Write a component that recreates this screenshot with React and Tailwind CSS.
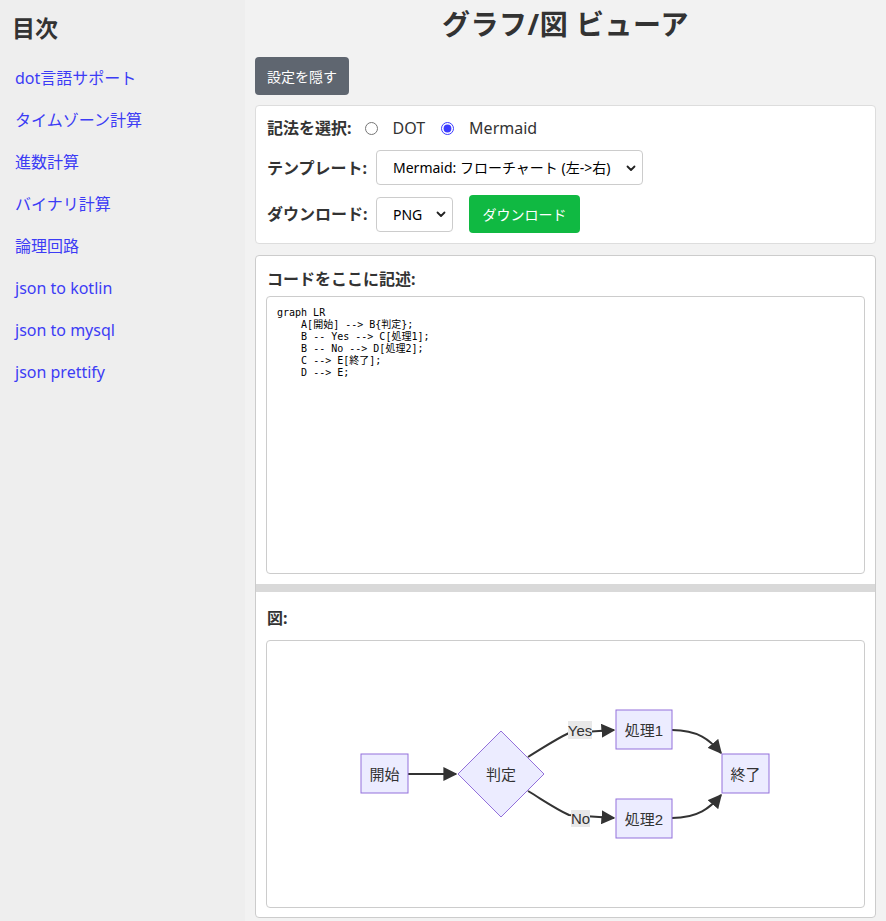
import { useState } from "react";

const links = [
  "dot言語サポート",
  "タイムゾーン計算",
  "進数計算",
  "バイナリ計算",
  "論理回路",
  "json to kotlin",
  "json to mysql",
  "json prettify",
];

const code = `graph LR
    A[開始] --> B{判定};
    B -- Yes --> C[処理1];
    B -- No --> D[処理2];
    C --> E[終了];
    D --> E;`;

const sans = "font-['Noto_Sans','Noto_Sans_CJK_JP',sans-serif]";

function Chevron() {
  return (
    <svg width="10" height="10" viewBox="0 0 10 10" className="pointer-events-none absolute right-[7px] top-1/2 -translate-y-1/2">
      <path d="M1.5 3.5 L5 7 L8.5 3.5" fill="none" stroke="#222" strokeWidth="1.8" strokeLinecap="round" strokeLinejoin="round" />
    </svg>
  );
}

function Diagram() {
  const node = "fill-[#ececff] stroke-[#9370db]";
  return (
    <svg viewBox="267 641 597 266" className="w-full h-full block">
      <defs>
        <marker id="arr" viewBox="0 0 10 10" refX="9" refY="5" markerWidth="7" markerHeight="7" orient="auto">
          <path d="M0 0 L10 5 L0 10 z" fill="#333" />
        </marker>
      </defs>
      <g fill="none" stroke="#333" strokeWidth="2">
        <path d="M408 774 L456 774" markerEnd="url(#arr)" />
        <path d="M528 757 C546 746 556 739 569 733 L614 730" markerEnd="url(#arr)" />
        <path d="M528 791 C546 802 556 809 569 815 L614 818" markerEnd="url(#arr)" />
        <path d="M672 730 C698 730 710 740 721 753" markerEnd="url(#arr)" />
        <path d="M672 818 C698 818 710 808 721 795" markerEnd="url(#arr)" />
      </g>
      <rect x="568" y="721" width="24" height="18" fill="#e8e8e8" />
      <rect x="571" y="810" width="19" height="17" fill="#e8e8e8" />
      <g className={node} strokeWidth="1">
        <rect x="361" y="754" width="47" height="39" />
        <path d="M501 731 L544 774 L501 817 L458 774 Z" />
        <rect x="616" y="710" width="56" height="39" />
        <rect x="616" y="799" width="56" height="39" />
        <rect x="722" y="754" width="47" height="39" />
      </g>
      <g fill="#333" fontSize="15" textAnchor="middle" dominantBaseline="central" fontFamily="'Liberation Sans','Noto Sans CJK JP',sans-serif">
        <text x="384.5" y="774">開始</text>
        <text x="501" y="774">判定</text>
        <text x="644" y="730">処理1</text>
        <text x="644" y="819">処理2</text>
        <text x="745.5" y="774">終了</text>
        <text x="580" y="730">Yes</text>
        <text x="580.5" y="818.5">No</text>
      </g>
    </svg>
  );
}

export default function App() {
  const [mode, setMode] = useState("mermaid");
  const [showSettings, setShowSettings] = useState(true);

  return (
    <div className={`flex min-h-screen bg-[#f2f2f2] text-[#333] ${sans}`}>
      {/* Sidebar */}
      <aside className="w-[245px] shrink-0 bg-[#eeeeee] pl-[12px] pt-[11px]">
        <h2 className="text-[23px] font-bold leading-[34px] mb-[22px]">目次</h2>
        <ul className="flex flex-col">
          {links.map((l) => (
            <li key={l} className="h-[42px] flex items-start">
              <a href="#" className="text-[16px] leading-[22px] text-[#3c3cf5] pl-[3px]">{l}</a>
            </li>
          ))}
        </ul>
      </aside>

      {/* Main */}
      <main className="flex-1 px-[10px] pb-[3px]">
        <h1 className="text-center text-[28px] font-bold leading-[40px] pt-[4px] mb-[13px] tracking-[0.5px]">グラフ/図 ビューア</h1>

        <button
          onClick={() => setShowSettings(!showSettings)}
          className="h-[38px] px-[12px] rounded-[4px] bg-[#5f6670] text-white text-[14px] mb-[10px]"
        >
          {showSettings ? "設定を隠す" : "設定を表示"}
        </button>

        {showSettings && (
          <div className="bg-white border border-[#dddddd] rounded-[4px] px-[11px] pt-[10px] pb-[10px] flex flex-col gap-[10px] mb-[11px]">
            <div className="flex items-center h-[24px] text-[16px]">
              <span className="font-bold mr-[10px]">記法を選択:</span>
              <label className="flex items-center">
                <input type="radio" checked={mode === "dot"} onChange={() => setMode("dot")} className="w-[13px] h-[13px] m-[3px] accent-[#3b3bff]" />
                <span className="ml-[12px] mr-[13px]">DOT</span>
              </label>
              <label className="flex items-center">
                <input type="radio" checked={mode === "mermaid"} onChange={() => setMode("mermaid")} className="w-[13px] h-[13px] m-[3px] accent-[#3b3bff]" />
                <span className="ml-[12px]">Mermaid</span>
              </label>
            </div>
            <div className="flex items-center text-[16px]">
              <span className="font-bold w-[109px]">テンプレート:</span>
              <div className="relative">
                <select className="appearance-none w-[267px] h-[35px] border border-[#cccccc] rounded-[4px] bg-white pl-[16px] text-[14px] text-black">
                  <option>Mermaid: フローチャート (左-&gt;右)</option>
                </select>
                <Chevron />
              </div>
            </div>
            <div className="flex items-center text-[16px]">
              <span className="font-bold w-[109px]">ダウンロード:</span>
              <div className="relative">
                <select className="appearance-none w-[77px] h-[35px] border border-[#cccccc] rounded-[4px] bg-white pl-[16px] text-[14px] text-black">
                  <option>PNG</option>
                  <option>SVG</option>
                </select>
                <Chevron />
              </div>
              <button className="ml-[16px] h-[38px] w-[111px] rounded-[4px] bg-[#10b942] text-white text-[14px]">ダウンロード</button>
            </div>
          </div>
        )}

        {/* Editor + Preview */}
        <div className="bg-white border border-[#cccccc] rounded-[4px]">
          <div className="px-[10px] pt-[12px] pb-[10px]">
            <h3 className="text-[16px] font-bold leading-[22px] mb-[6px] pl-[1px]">コードをここに記述:</h3>
            <textarea
              readOnly
              defaultValue={code}
              className="block w-full h-[278px] resize-none border border-[#cccccc] rounded-[4px] px-[10px] pt-[10px] text-[10px] leading-[12px] text-black font-['DejaVu_Sans_Mono','Noto_Sans_CJK_JP',monospace] outline-none"
            />
          </div>
          <div className="h-[8px] bg-[#d9d9d9]" />
          <div className="px-[10px] pt-[15px] pb-[9px]">
            <h3 className="text-[16px] font-bold leading-[22px] mb-[11px] pl-[1px]">図:</h3>
            <div className="h-[268px] border border-[#cccccc] rounded-[4px]">
              <Diagram />
            </div>
          </div>
        </div>
      </main>
    </div>
  );
}
